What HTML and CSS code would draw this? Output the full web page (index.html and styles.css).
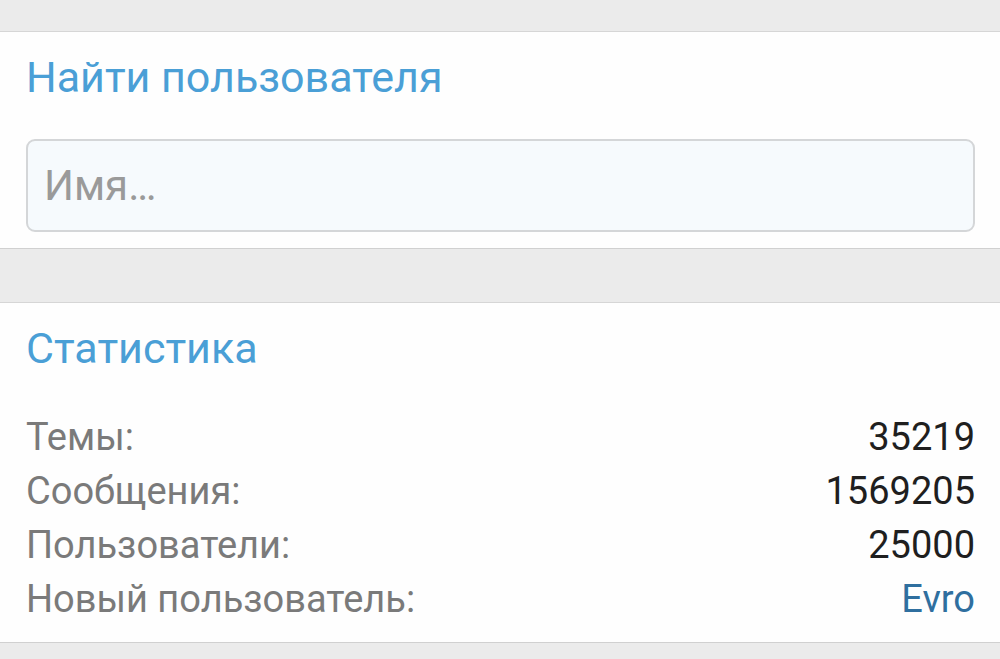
FILE: index.html
```html
<!DOCTYPE html>
<html lang="ru">

<head>
    <meta charset="UTF-8">
    <meta name="viewport" content="width=device-width, initial-scale=1.0">
    <title>Форум</title>
    <link rel="stylesheet" href="styles.css">
</head>

<body>
    <div class="gap-top"></div>

    <div class="block">
        <h2 class="block-title">Найти пользователя</h2>
        <input class="search-input" type="text" placeholder="Имя…">
    </div>

    <div class="gap"></div>

    <div class="block">
        <h2 class="block-title">Статистика</h2>
        <dl class="stats">
            <div class="stat-line">
                <dt>Темы:</dt>
                <dd>35219</dd>
            </div>
            <div class="stat-line">
                <dt>Сообщения:</dt>
                <dd>1569205</dd>
            </div>
            <div class="stat-line">
                <dt>Пользователи:</dt>
                <dd>25000</dd>
            </div>
            <div class="stat-line">
                <dt>Новый пользователь:</dt>
                <dd><a href="#" class="user-link">Evro</a></dd>
            </div>
        </dl>
    </div>

    <div class="gap"></div>
</body>

</html>
```

FILE: styles.css
```css
* {
    margin: 0;
    padding: 0;
    box-sizing: border-box;
}

body {
    background: #ebebeb;
    font-family: Roboto, 'Noto Sans', sans-serif;
    color: #1f1f1f;
}

.gap-top {
    height: 31px;
}

.gap {
    height: 53px;
}

.block {
    background: #fefefe;
    border-top: 1px solid #d6d6d6;
    border-bottom: 1px solid #d0d0d0;
    padding: 20px 25px 16px 26px;
}

.block-title {
    font-size: 43px;
    font-weight: normal;
    line-height: 50px;
    color: #4a9fd6;
    margin-bottom: 37px;
}

.search-input {
    display: block;
    width: 100%;
    height: 93px;
    padding: 0 16px;
    font-family: inherit;
    font-size: 42px;
    color: #333;
    background: #f6fafd;
    border: 2px solid #d4d6d8;
    border-radius: 9px;
    outline: none;
}

.search-input::placeholder {
    color: #9a9a9a;
}

.stat-line {
    display: flex;
    justify-content: space-between;
    font-size: 38px;
    line-height: 54px;
}

.stat-line dt {
    color: #7a7a7a;
}

.stat-line dd {
    color: #1f1f1f;
}

.user-link {
    color: #2f6f9f;
    text-decoration: none;
}
```
